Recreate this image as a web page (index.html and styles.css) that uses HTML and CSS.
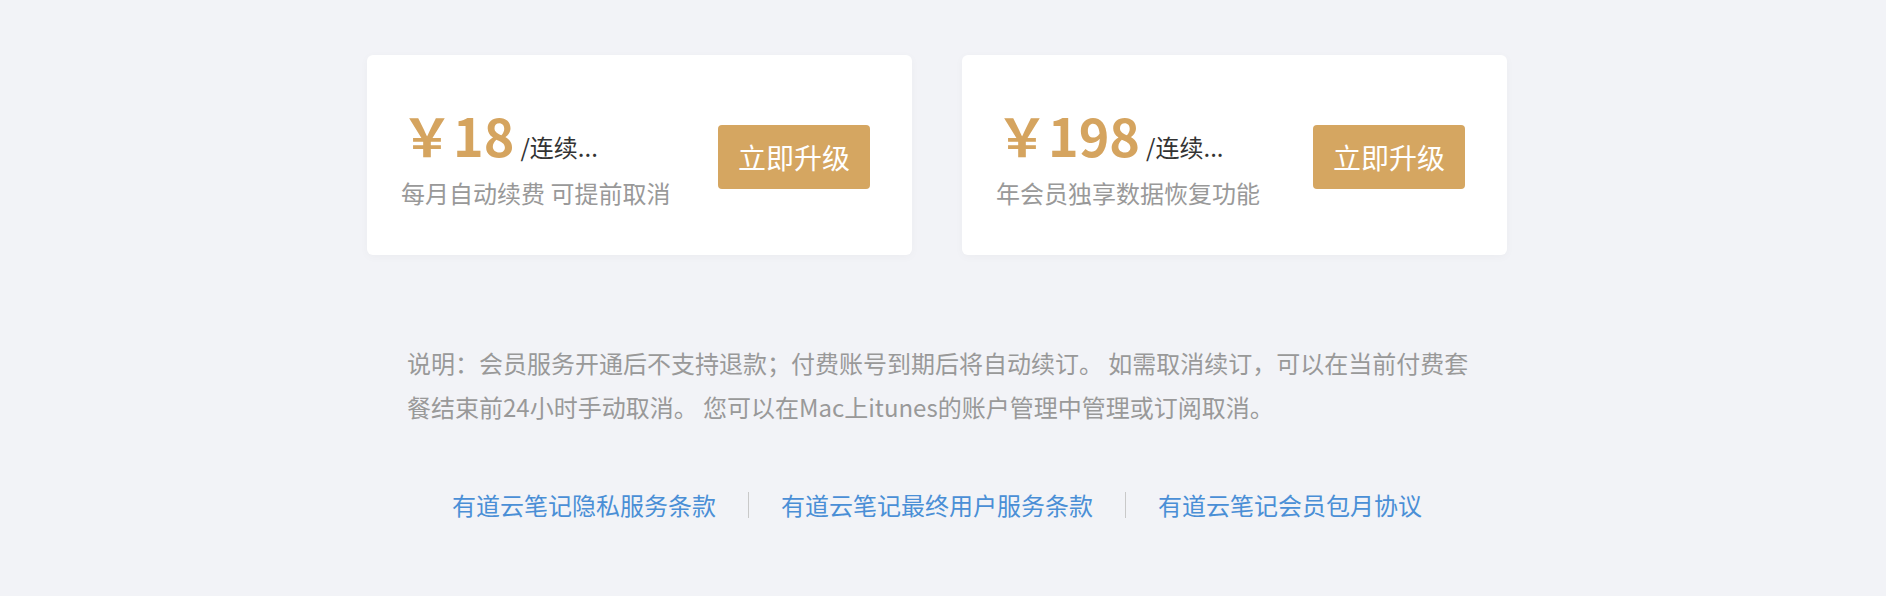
FILE: index.html
```html
<!DOCTYPE html>
<html lang="zh-CN">
<head>
  <meta charset="UTF-8">
  <meta name="viewport" content="width=device-width, initial-scale=1.0">
  <title>会员升级 - 有道云笔记</title>
  <link rel="stylesheet" href="styles.css">
</head>
<body>
  <div class="container">
    <div class="plans">
      <div class="plan-card">
        <div class="plan-info">
          <div class="price-row">
            <span class="price">￥18</span>
            <span class="price-unit">/连续...</span>
          </div>
          <div class="plan-desc">每月自动续费 可提前取消</div>
        </div>
        <button class="upgrade-btn">立即升级</button>
      </div>

      <div class="plan-card">
        <div class="plan-info">
          <div class="price-row">
            <span class="price">￥198</span>
            <span class="price-unit">/连续...</span>
          </div>
          <div class="plan-desc">年会员独享数据恢复功能</div>
        </div>
        <button class="upgrade-btn">立即升级</button>
      </div>
    </div>

    <p class="notice">说明：会员服务开通后不支持退款；付费账号到期后将自动续订。 如需取消续订，可以在当前付费套餐结束前24小时手动取消。 您可以在Mac上itunes的账户管理中管理或订阅取消。</p>

    <div class="links">
      <a class="link" href="#">有道云笔记隐私服务条款</a>
      <span class="link-sep"></span>
      <a class="link" href="#">有道云笔记最终用户服务条款</a>
      <span class="link-sep"></span>
      <a class="link" href="#">有道云笔记会员包月协议</a>
    </div>
  </div>
</body>
</html>
```

FILE: styles.css
```css
body {
  font-family: 'PingFang SC', 'Noto Sans CJK SC', 'Noto Sans', sans-serif;
  background-color: #f2f3f7;
  color: #333333;
  margin: 0;
  padding: 55px 12px 0 0;
  min-height: 100vh;
  box-sizing: border-box;
}

.container {
  width: 1140px;
  margin: 0 auto;
}

.plans {
  display: grid;
  grid-template-columns: 1fr 1fr;
  gap: 50px;
}

.plan-card {
  height: 200px;
  padding: 0 42px 0 34px;
  background-color: #ffffff;
  border-radius: 6px;
  box-shadow: 0 2px 10px rgba(0, 0, 0, 0.03);
  display: flex;
  align-items: center;
  justify-content: space-between;
  box-sizing: border-box;
}

.plan-info {
  padding-top: 9px;
}

.price-row {
  display: flex;
  align-items: baseline;
}

.price {
  font-size: 52px;
  line-height: 52px;
  font-weight: 600;
  color: #d5a45f;
}

.price-unit {
  font-size: 24px;
  color: #333333;
  margin-left: 6px;
}

.plan-desc {
  margin-top: 11px;
  font-size: 24px;
  color: #999999;
}

.upgrade-btn {
  width: 152px;
  height: 64px;
  margin-top: 4px;
  padding: 0;
  border: none;
  border-radius: 4px;
  background-color: #d5a661;
  color: #ffffff;
  font-family: inherit;
  font-size: 28px;
  line-height: 64px;
  cursor: pointer;
}

.notice {
  margin: 86px 0 0;
  padding: 0 36px 0 40px;
  font-size: 24px;
  line-height: 44px;
  color: #999999;
}

.links {
  margin-top: 63px;
  display: flex;
  justify-content: center;
  align-items: center;
}

.link {
  font-size: 24px;
  line-height: 26px;
  color: #4a8fd6;
  text-decoration: none;
}

.link-sep {
  width: 1px;
  height: 26px;
  margin: 0 32px;
  background-color: #c9c9c9;
}
```
